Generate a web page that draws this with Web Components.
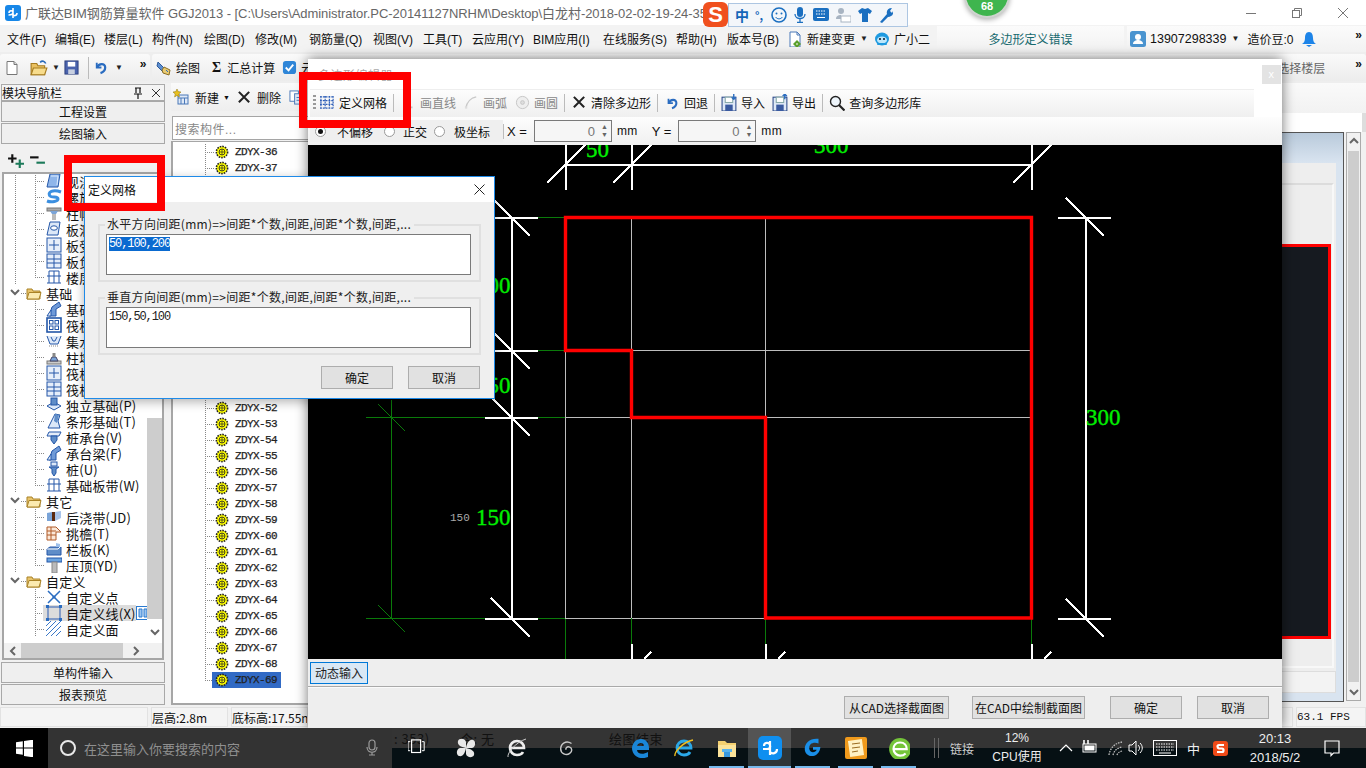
<!DOCTYPE html>
<html lang="zh">
<head>
<meta charset="utf-8">
<title>GGJ2013</title>
<style>
  html, body { margin: 0; height: 100%; overflow: hidden; background: #000; }
  body { font: 12px "Liberation Sans", "Noto Sans CJK SC", sans-serif; color: #111; }
</style>
</head>
<body>
<gl-desktop>
  <gl-app></gl-app>
  <gl-taskbar></gl-taskbar>
  <polygon-editor></polygon-editor>
  <grid-dialog></grid-dialog>
  <red-mark style="left:299px;top:72px;width:112px;height:56px"></red-mark>
  <red-mark style="left:64px;top:155px;width:101px;height:56px"></red-mark>
  <ime-bar></ime-bar>
  <speed-badge>68</speed-badge>
</gl-desktop>

<script>
const CJK = '"Liberation Sans", "Noto Sans CJK SC", sans-serif';
const SONG = '"Noto Sans CJK SC", "Liberation Sans", sans-serif';

const svg = (w, h, body, box) => `<svg width="${w}" height="${h}" viewBox="${box || `0 0 ${w} ${h}`}" style="display:block;flex:none">${body}</svg>`;

const ICONS = {
  // main toolbar
  doc: `<path d="M3 1.5h7l3 3v10H3z" fill="#fff" stroke="#777"/><path d="M10 1.5v3h3" fill="#ddd" stroke="#777"/>`,
  open: `<path d="M1 4h5l1 2h6v8H1z" fill="#e9c060" stroke="#a67c20"/><path d="M3 8h12l-2 6H1z" fill="#f7dc8c" stroke="#a67c20"/><path d="M9 3c2-2 4-1 5 1" fill="none" stroke="#2a6ab8" stroke-width="1.4"/>`,
  save: `<rect x="1" y="1" width="14" height="14" fill="#4a63ad" stroke="#2c3f7c"/><rect x="4" y="2" width="8" height="5" fill="#fff"/><rect x="4.5" y="10" width="7" height="5" fill="#c8d0e0"/>`,
  undo: `<path d="M4 3v5h5" fill="none" stroke="#2a6cc0" stroke-width="2"/><path d="M4.5 8C6 3.5 13 3 13 8c0 3-2 5-5 6" fill="none" stroke="#2a6cc0" stroke-width="2.4"/>`,
  brush: `<path d="M2 2l6 6-2 3-5-5z" fill="#5c8ed0" stroke="#2c5a9a"/><path d="M8 7l6 3-1 5-6-2-1-3z" fill="#e8c970" stroke="#8a6e26"/><path d="M10 10l2 2" stroke="#2a6cc0"/>`,
  cloud: `<rect x="1" y="1" width="14" height="14" rx="3" fill="#2f86d8"/><path d="M4 8l3 3 5-6" fill="none" stroke="#fff" stroke-width="2"/>`,
  change: `<path d="M3 1h7l3 3v12H3z" fill="#fff" stroke="#4a78b8"/><path d="M10 1v3h3" fill="none" stroke="#4a78b8"/><path d="M10 9l4 4-4 4-4-4z" fill="#5aa02c"/><path d="M9 13h2" stroke="#fff"/>`,
  robot: `<ellipse cx="8" cy="8" rx="7" ry="6.5" fill="#1f9ae0"/><ellipse cx="8" cy="9" rx="5" ry="3.6" fill="#bfe8fb"/><circle cx="6" cy="8" r="1.1" fill="#123"/><circle cx="10" cy="8" r="1.1" fill="#123"/><path d="M3 14l1-2h8l1 2" fill="#1f9ae0"/>`,
  user: `<rect width="16" height="16" rx="2.5" fill="#4a94d0"/><circle cx="8" cy="6" r="3" fill="#fff"/><path d="M3 13c0-3 3-4 5-4s5 1 5 4z" fill="#fff"/>`,
  bell: `<path d="M8 1c3 0 4 3 4 6 0 3 1 5 3 6H1c2-1 3-3 3-6 0-3 1-6 4-6z" fill="#1d84e8"/><path d="M5 14h6l-3 2z" fill="#1d84e8"/>`,
  // nav + list
  plus: `<path d="M5 3v8M1 7h8" stroke="#111" stroke-width="2"/><path d="M12 8v8M8 12h8" stroke="#1c7a5a" stroke-width="2"/>`,
  minus: `<path d="M1 6h8" stroke="#111" stroke-width="2"/><path d="M7 11h8" stroke="#1c7a5a" stroke-width="2"/>`,
  addnew: `<rect x="5" y="6" width="10" height="9" fill="#dfe9f7" stroke="#4a78b8"/><path d="M5 9h10M8 9v6M11.5 9v6" stroke="#4a78b8"/><path d="M4 0l1.2 2.6L8 3 5.8 5 6.4 8 4 6.4 1.6 8l.6-3L0 3l2.8-.4z" fill="#e8c020" stroke="#8a7010" stroke-width=".5"/>`,
  cross: `<path d="M2 2l11 11M13 2L2 13" stroke="#222" stroke-width="2.2"/>`,
  copy: `<rect x="1" y="1" width="9" height="11" fill="#fff" stroke="#4a78b8"/><rect x="6" y="4" width="9" height="11" fill="#dfe9f7" stroke="#4a78b8"/><path d="M8 8h5M8 11h5" stroke="#4a78b8"/>`,
  gear: `<circle cx="7" cy="7" r="5.6" fill="#ff0" stroke="#222" stroke-width="1.6" stroke-dasharray="1.6 1"/><circle cx="7" cy="7" r="3" fill="#ff0" stroke="#222" stroke-width=".8"/><path d="M7 4v6M4 7h6" stroke="#222" stroke-width=".7"/>`,
  // tree
  folder: `<path d="M1 4h5l1 2h7v8H1z" fill="#e8c46c" stroke="#a98226"/><path d="M3 7.5h12l-2 6.5H1z" fill="#fbeab0" stroke="#a98226"/>`,
  slab: `<path d="M4 1h10l-2 13H1z" fill="#8fb6ea" stroke="#2457a8"/><path d="M5 3h7l-1 9" fill="none" stroke="#dcebff"/>`,
  spiral: `<path d="M15 3C7 0 1 3 4 7c2 2 8 0 8 3 0 2-6 4-11 2" fill="none" stroke="#3b8fe0" stroke-width="3"/>`,
  cap: `<rect x="1" y="3" width="14" height="3" fill="#aaa" stroke="#777"/><path d="M4 6h8l-2 3H6z" fill="#7aa4d8"/><rect x="6" y="9" width="4" height="6" fill="#bbb"/>`,
  hole: `<path d="M4 1h10l-2 13H1z" fill="#dce8f8" stroke="#2457a8"/><ellipse cx="8" cy="7" rx="3.4" ry="2.2" fill="#fff" stroke="#2457a8"/>`,
  cell: `<rect x="1" y="1" width="14" height="14" fill="#e6eefa" stroke="#2457a8"/><path d="M8 3v10M3 8h10" stroke="#2457a8"/>`,
  cell2: `<rect x="1" y="1" width="14" height="14" fill="#e6eefa" stroke="#2457a8"/><path d="M8 1v14M1 6h14M1 10h14" stroke="#2457a8"/>`,
  beam: `<path d="M1 14h14" stroke="#2457a8"/><path d="M3 2h10M3 14V2M8 14V2M13 14V2M1 7h14" stroke="#2457a8"/>`,
  column: `<path d="M3 15l3-9 7-5 2 4-5 3v7z" fill="#6f9ad8" stroke="#2457a8"/><path d="M1 15l4-6v6z" fill="#dce8f8" stroke="#2457a8"/>`,
  grid: `<rect x="1" y="1" width="14" height="14" fill="#fff" stroke="#2457a8" stroke-width="1.6"/><rect x="3.5" y="3.5" width="3.5" height="3.5" fill="none" stroke="#2457a8"/><rect x="9" y="3.5" width="3.5" height="3.5" fill="none" stroke="#2457a8"/><rect x="3.5" y="9" width="3.5" height="3.5" fill="none" stroke="#2457a8"/><rect x="9" y="9" width="3.5" height="3.5" fill="none" stroke="#2457a8"/>`,
  pit: `<path d="M1 3l3 8h8l3-8" fill="#dce8f8" stroke="#2457a8"/><path d="M5 4l2 4h2l2-4" fill="none" stroke="#2457a8"/><path d="M3 13h10" stroke="#888" stroke-dasharray="1 1"/>`,
  pier: `<rect x="1" y="12" width="14" height="3" fill="#ccc" stroke="#777"/><path d="M4 12l2-4h4l2 4z" fill="#7aa4d8" stroke="#446"/><rect x="6.5" y="4" width="3" height="4" fill="#888"/>`,
  footing: `<path d="M1 9l7-4 7 4-7 4z" fill="#dce8f8" stroke="#2457a8"/><rect x="5" y="1" width="6" height="7" fill="#5f8dc8" stroke="#2457a8"/>`,
  strip: `<path d="M2 15l4-8 3-6 5 1-2 6 2 7H2z" fill="#dce8f8" stroke="#2457a8"/><path d="M9 1l4 1-2 8-3-2z" fill="#5f8dc8"/>`,
  cap2: `<path d="M1 7l2-4h12l-2 4z" fill="#e4ecf8" stroke="#2457a8"/><path d="M5 7h6v4l-3 4-3-4z" fill="#5f8dc8" stroke="#2457a8"/>`,
  pile: `<rect x="5" y="1" width="6" height="4" fill="#dce8f8" stroke="#2457a8"/><path d="M3 6h10l-3 2v4l-2 3-2-3V8z" fill="#5f8dc8" stroke="#2457a8"/>`,
  pour: `<path d="M1 4l5-1v9H1z" fill="#7aa4d8"/><path d="M6 3h3v9H6z" fill="#5b2a10"/><path d="M9 3l6-1v7l-6 3z" fill="#a8c4ea"/>`,
  eave: `<path d="M1 2h9l5 5h-5v8H1z" fill="#fbe8d8" stroke="#b05a28"/><path d="M1 6h9M1 10h9M5 2v13" stroke="#b05a28"/>`,
  rail: `<path d="M1 8l3-2h11v8H1z" fill="#5f8dc8" stroke="#2457a8"/><path d="M1 8h11l3-3" fill="none" stroke="#fff"/><path d="M10 2l4 1v3h-4z" fill="#9ec0ea"/>`,
  coping: `<rect x="1" y="1" width="15" height="4" fill="#6aa4e0" stroke="#2457a8"/><rect x="6" y="5" width="5" height="11" fill="#bbb" stroke="#888"/>`,
  xpoint: `<path d="M2 2l12 12M14 2L2 14" stroke="#2a6cc0" stroke-width="1.5"/><circle cx="8" cy="8" r="1.6" fill="#2a6cc0"/>`,
  xline: `<rect x="2" y="2" width="12" height="12" fill="none" stroke="#2a5ab0"/><path d="M0 0h3v3H0zM13 0h3v3h-3zM0 13h3v3H0zM13 13h3v3h-3z" fill="#2a6cc0"/>`,
  xface: `<path d="M0 5l5-5M0 10L10 0M0 15L15 0M5 15L15 5M10 15l5-5" stroke="#3a78c8"/>`,
  // polygon editor
  mesh: `<path d="M1 1v13M5.5 1v13M10 1v13M14 1v13M0 2h15M0 6h15M0 10h15M0 14h15" stroke="#2f5fb8" stroke-dasharray="2 1" stroke-width="1.2"/>`,
  line: `<path d="M3 2l2 10" stroke="#d2d2d2"/><path d="M6 9v4h6" fill="none" stroke="#c4c4c4" stroke-width="2"/>`,
  arc: `<path d="M2 14C3 7 8 3 13 2" fill="none" stroke="#c8c8c8" stroke-width="1.5"/><rect x="1" y="12" width="2.5" height="2.5" fill="#ddd"/>`,
  circle: `<circle cx="8" cy="8" r="6.5" fill="#eee" stroke="#c4c4c4"/><circle cx="8" cy="8" r="2" fill="#ddd" stroke="#c4c4c4"/>`,
  diskin: `<rect x="1" y="3" width="13" height="13" fill="#dfe9f7" stroke="#2c4a8a"/><rect x="4" y="10" width="7" height="6" fill="#3a5aa0"/><rect x="4" y="3" width="7" height="5" fill="#fff" stroke="#8aa"/><path d="M12 0v5M10 3l2 2 2-2" fill="none" stroke="#2a6cc0" stroke-width="1.3"/>`,
  diskout: `<rect x="1" y="3" width="13" height="13" fill="#dfe9f7" stroke="#2c4a8a"/><rect x="4" y="10" width="7" height="6" fill="#3a5aa0"/><rect x="4" y="3" width="7" height="5" fill="#fff" stroke="#8aa"/><path d="M12 5V0M10 2l2-2 2 2" fill="none" stroke="#2a6cc0" stroke-width="1.3"/>`,
  zoom: `<circle cx="6.5" cy="6.5" r="5" fill="#eef5fb" stroke="#222" stroke-width="1.4"/><path d="M10 10l5.5 5.5" stroke="#222" stroke-width="2.2"/>`,
  // taskbar
  win: `<path d="M0 2.2l6.8-1v6.2H0zM8 1l9-1.3v7.7H8zM0 8.6h6.8v6.2l-6.8-1zM8 8.6h9v8.7l-9-1.3z" fill="#fff"/>`,
  mic: `<rect x="5" y="1" width="6" height="10" rx="3" fill="none" stroke="#9a9a9a" stroke-width="1.2"/><path d="M3 8c0 7 10 7 10 0M8 13v3M5 16h6" fill="none" stroke="#9a9a9a" stroke-width="1.2"/>`,
  taskview: `<rect x="4" y="1" width="10" height="14" fill="none" stroke="#fff" stroke-width="1.3"/><path d="M2.5 3H0v10h2.5M15.5 3H18v10h-2.5" fill="none" stroke="#fff" stroke-width="1.1"/>`,
  pinwheel: `<g fill="#e8e8e8"><path d="M10 10C5 9 1 7 2 3c1-3 7-3 8 1z"/><path d="M10 10C11 5 13 1 17 2c3 1 3 7-1 8z"/><path d="M10 10C15 11 19 13 18 17c-1 3-7 3-8-1z"/><path d="M10 10C9 15 7 19 3 18c-3-1-3-7 1-8z"/></g>`,
  ieline: `<path d="M3 10h14c0-4-3-7-7-7s-7 3-7 7 3 7 7 7c3 0 5-1 6-3" fill="none" stroke="#eee" stroke-width="2.6"/><path d="M1 19C0 15 9 4 19 1" fill="none" stroke="#ccc"/>`,
  gswirl: `<path d="M15 5C9 1 3 5 3 11c0 5 6 8 10 5 3-2 3-6 0-7-3-1-5 1-4 3" fill="none" stroke="#c8c8c8" stroke-width="1.6"/>`,
  edge: `<path d="M2 11C2 5 6 1 11 1c5 0 8 4 8 9v2H7c0 4 6 5 11 2v5c-7 3-15 0-16-8zM7 8h7c0-4-6-4-7 0z" fill="#1a86d8"/>`,
  ie: `<path d="M3 10h14c0-4-3-7-7-7s-7 3-7 7 3 7 7 7c3 0 5-1 6-3" fill="none" stroke="#2ba8e8" stroke-width="2.8"/><path d="M1 18C0 14 9 4 19 2" fill="none" stroke="#f0c020" stroke-width="1.4"/>`,
  explorer: `<path d="M1 3h7l2 2h9v14H1z" fill="#f4d070"/><rect x="1" y="7" width="18" height="12" fill="#fbe39a"/><path d="M7 13h6v6H7z" fill="#3a9ae0"/><path d="M5 11h10v3H5z" fill="#5ab4ee"/>`,
  gld: `<rect x="0" y="0" width="24" height="24" rx="5" fill="#0f8ff0"/><path d="M12 5v14M6 10c0-4 5-4 6-1s-1 4-3 4H5M19 13c0 5-5 5-7 3" fill="none" stroke="#fff" stroke-width="2.2"/>`,
  gblue: `<path d="M18 2C9 1 3 6 3 13c0 7 8 10 13 6 3-2 4-6 4-8h-8v3h4c-1 3-7 4-8-1-1-6 5-8 10-6z" fill="#1a8fe8"/>`,
  notes: `<rect x="1" y="1" width="22" height="22" rx="2" fill="#f09a1c"/><rect x="5" y="4" width="14" height="16" fill="#fff1c4" transform="rotate(-8 12 12)"/><path d="M8 8l8-1M8 12l8-1M8 16l6-1" stroke="#9a6a20"/>`,
  greene: `<circle cx="11" cy="11" r="10" fill="#74c43a"/><path d="M5 11h12c0-3-2-6-6-6s-6 3-6 6 3 6 6 6c2 0 4-1 5-2" fill="none" stroke="#fff" stroke-width="2"/>`,
  battery: `<rect x="2" y="5" width="13" height="8" fill="none" stroke="#fff"/><rect x="3.5" y="6.5" width="10" height="5" fill="#fff"/><path d="M3 1v4M7 1v4" stroke="#fff" stroke-width="1.6"/>`,
  wifi: `<path d="M2 15C3 8 8 3 15 2M6 15c1-4 4-7 9-8M10 15c.5-2 2-3 5-4" fill="none" stroke="#bbb" stroke-dasharray="1.6 1" stroke-width="1.3"/>`,
  volume: `<path d="M1 6h3l4-4v14l-4-4H1z" fill="none" stroke="#fff"/><path d="M10 6c2 2 2 4 0 6M12 4c3 3 3 7 0 10" fill="none" stroke="#fff"/>`,
  keyboard: `<rect x=".5" y=".5" width="23" height="15" fill="none" stroke="#fff"/><path d="M3 4h18M3 7h18M3 10h18" stroke="#fff" stroke-dasharray="1.5 1"/><path d="M6 13h12" stroke="#fff"/>`,
  sogou: `<rect x="1" y="1" width="15" height="15" rx="3" fill="#f04a18"/><path d="M12 5H7c-2 0-2 3 0 3.500h3c2 0 2 3.500 0 3.500H5" fill="none" stroke="#fff" stroke-width="2.2"/>`,
  notify: `<path d="M1 1h14v12H9.500L7 15.500V13H1z" fill="none" stroke="#fff" stroke-width="1.2"/>`,
  logo: `<rect width="16" height="16" rx="3" fill="#1787e8"/><path d="M8 3v10M4 8c0-3 4-3 4-.5S6 10 3.500 10M12 8c0 3-4 3.500-4 1" fill="none" stroke="#fff" stroke-width="1.6"/>`
};
const icon = (name, w = 16, h = w, box = '0 0 16 16') => svg(w, h, ICONS[name], box);

class Part extends HTMLElement {
  constructor() {
    super();
    this.attachShadow({ mode: 'open' });
  }
  connectedCallback() {
    this.shadowRoot.innerHTML = `<style>${this.constructor.styles}</style>${this.markup()}`;
  }
  markup() { return '<slot></slot>'; }
}

class GlDesktop extends Part {
  static styles = `:host { display: flex; flex-direction: column; position: relative; width: 1366px; height: 768px; overflow: hidden; }`;
}

class RedMark extends Part {
  static styles = `:host { position: absolute; box-sizing: border-box; border: 8px solid #f00; z-index: 5; }`;
}

class SpeedBadge extends Part {
  static styles = `:host { position: absolute; left: 964px; top: -28px; width: 46px; height: 46px; box-sizing: border-box; border-radius: 50%;
      background: #3fb54e; border: 2px solid #cfd4cf; box-shadow: 0 2px 5px rgba(0,0,0,.3); color: #fff; font: bold 11px "Liberation Sans", sans-serif;
      display: flex; align-items: flex-end; justify-content: center; padding-bottom: 4px; z-index: 6; }`;
}

class ImeBar extends Part {
  static styles = `
    :host { position: absolute; left: 703px; top: 2px; display: flex; align-items: center; z-index: 6; }
    .s { width: 25px; height: 25px; border-radius: 6px; background: #f0501e; color: #fff; font: bold 22px "Liberation Sans", sans-serif; display: flex; align-items: center; justify-content: center; position: relative; z-index: 1; }
    .bar { display: flex; align-items: center; gap: 6px; height: 24px; width: 180px; box-sizing: border-box; padding-left: 6px; background: #f3f6fa; border: 1px solid #adc6e2; color: #1565b8; font: bold 14px "Noto Sans CJK SC", sans-serif; }
    .p { width: 10px; font-size: 11px; }`;
  markup() {
    const blue = '#1b6fc0';
    return `<div class="s">S</div><div class="bar"><span>中</span><span class="p">°,</span>
      ${svg(16, 16, `<circle cx="8" cy="8" r="7" fill="none" stroke="${blue}" stroke-width="1.6"/><circle cx="5.500" cy="6.500" r="1" fill="${blue}"/><circle cx="10.500" cy="6.500" r="1" fill="${blue}"/><path d="M4.500 10c2 2.500 5 2.500 7 0" fill="none" stroke="${blue}"/>`)}
      ${svg(14, 16, `<rect x="4" y="0" width="6" height="10" rx="3" fill="${blue}"/><path d="M2 7c0 6 10 6 10 0M7 12v3M4 15.500h6" fill="none" stroke="${blue}" stroke-width="1.3"/>`)}
      ${svg(16, 14, `<rect width="16" height="13" rx="2" fill="${blue}"/><path d="M3 3h10M3 6h10" stroke="#fff" stroke-dasharray="1.500 1"/><path d="M4 9.500h8" stroke="#fff"/>`)}
      ${svg(16, 16, `<circle cx="6" cy="4" r="3" fill="#a8b4c2"/><path d="M1 12c0-3 2-4 5-4v4z" fill="#a8b4c2"/><rect x="6" y="9" width="10" height="6" fill="#fff" stroke="#a8b4c2"/>`)}
      ${svg(16, 16, `<path d="M5 1L1 4l2 3 2-1v9h6V6l2 1 2-3-4-3-3 1z" fill="${blue}"/>`)}
      ${svg(14, 16, `<path d="M1 15l7-8c-1-3 1-6 5-6l-2 3 2 2 1-2c1 4-2 6-5 6l-6 6z" fill="${blue}"/>`)}</div>`;
  }
}

class WinControls extends Part {
  static styles = `:host { display: flex; margin-left: auto; flex: none; color: #777; } span { width: 46px; display: flex; justify-content: center; }`;
  markup() {
    return `<span>${svg(10, 10, `<path d="M0 5.500h10" stroke="#777"/>`)}</span>
      <span>${svg(10, 10, `<rect x=".5" y="2.500" width="7" height="7" fill="none" stroke="#777"/><path d="M2.500 2.500v-2h7v7h-2" fill="none" stroke="#777"/>`)}</span>
      <span>${svg(10, 10, `<path d="M0 0l10 10M10 0L0 10" stroke="#777"/>`)}</span>`;
  }
}

class GlApp extends Part {
  static styles = `
    :host { display: flex; flex-direction: column; width: 1366px; height: 728px; flex: none; background: #f1f1f1; }
    .title { height: 25px; background: #fff; display: flex; align-items: center; padding-left: 5px; gap: 2px; color: #666; font-size: 13px; letter-spacing: -.06px; white-space: nowrap; overflow: hidden; flex: none; }
    .title b { font-weight: 400; width: 678px; margin-left: 2px; overflow: hidden; }
    .menu { height: 27px; display: flex; align-items: center; padding-left: 7px; font-size: 12px; background: #f3f3f3; position: relative; flex: none; }
    .menu span { white-space: nowrap; flex: none; }
    .menu .with { display: flex; gap: 4px; align-items: center; }
    .tab { width: 187px; height: 26px; background: linear-gradient(#fbfbfb, #f2f2f2); color: #16696e; font-size: 12px; display: flex; align-items: center; justify-content: center; flex: none; }
    .user { flex: 1; height: 26px; margin-left: 3px; padding-left: 3px; display: flex; align-items: center; background: linear-gradient(#fbfbfb, #f2f2f2); }
    .user span { white-space: nowrap; }
    .tools { height: 31px; display: flex; gap: 2px; background: #eeeeee; flex: none; }
    .group { display: flex; align-items: center; background: linear-gradient(#fafafa, #ececec); border-radius: 3px; margin-top: 2px; height: 27px; flex: none; }
    .sep { width: 1px; height: 22px; background: #bbb; }
    .drop { font-size: 8px; color: #222; }
    .more { font-size: 12px; font-weight: bold; color: #111; }
    .body { flex: 1; display: flex; min-height: 0; }
    .status { height: 22px; display: flex; gap: 3px; font: 12px ${SONG}; flex: none; padding-top: 1px; box-sizing: border-box; }
    .status span { border: 1px solid #e2e2e2; background: #f4f4f4; height: 20px; box-sizing: border-box; display: flex; align-items: center; white-space: nowrap; overflow: hidden; }`;
  markup() {
    const menus = [['文件(F)', 48], ['编辑(E)', 49], ['楼层(L)', 48], ['构件(N)', 52], ['绘图(D)', 51], ['修改(M)', 54], ['钢筋量(Q)', 64], ['视图(V)', 50], ['工具(T)', 49], ['云应用(Y)', 61], ['BIM应用(I)', 70], ['在线服务(S)', 73], ['帮助(H)', 51], ['版本号(B)', 60]];
    return `
      <div class="title">${icon('logo', 16)}<b>广联达BIM钢筋算量软件 GGJ2013 - [C:\\Users\\Administrator.PC-20141127NRHM\\Desktop\\白龙村-2018-02-02-19-24-35</b><win-controls></win-controls></div>
      <div class="menu">${menus.map(([m, w]) => `<span style="width:${w}px">${m}</span>`).join('')}
        <span class="with" style="width:87px">${icon('change', 16)}新建变更<i class="drop" style="font-style:normal;margin-left:1px">▼</i></span>
        <span class="with" style="width:63px">${icon('robot', 16)}广小二</span>
        <div class="tab">多边形定义错误</div>
        <div class="user">
          <span class="with" style="font-size:12.500px">${icon('user', 16)}13907298339</span><span class="drop" style="margin-left:5px">▼</span>
          <span style="margin-left:8px">造价豆:0</span><span style="margin-left:8px">${icon('bell', 16)}</span>
          <span class="more" style="margin-left:auto;padding-right:4px;margin-top:-8px">»</span>
        </div></div>
      <div class="tools">
        <div class="group" style="width:150px;padding-left:4px;gap:4px;box-sizing:border-box">
          ${icon('doc', 16)}<span style="width:2px"></span>${icon('open', 18, 18)}<span class="drop">▼</span>${icon('save', 15)}<span style="width:1px"></span><i class="sep"></i>${icon('undo', 15)}<span class="drop" style="margin-left:3px">▼</span><span class="more" style="margin-left:13px;margin-top:-8px">»</span>
        </div>
        <div class="group" style="flex:1;padding-left:4px;gap:4px">
          ${icon('brush', 16)}<span>绘图</span>
          <span style="font:bold 14px 'Liberation Serif',serif;margin-left:8px">Σ</span><span style="margin-left:2px">汇总计算</span>
          <span style="margin-left:3px">${icon('cloud', 15)}</span><span>云</span>
          <span style="margin-left:auto;color:#666;margin-right:26px">选择楼层</span><span class="more" style="margin-right:4px;margin-top:-8px">»</span>
        </div>
      </div>
      <div class="body"><nav-panel></nav-panel><part-list></part-list><work-area></work-area></div>
      <div class="status">
        <span style="width:148px"></span><span style="width:77px">层高:2.8m</span><span style="width:77px">底标高:17.55m</span>
        <span style="width:982px"></span><span style="width:70px;font:11px 'Liberation Mono',monospace">63.1 FPS</span>
      </div>`;
  }
}

class NavPanel extends Part {
  static styles = `
    :host { display: flex; flex-direction: column; width: 165px; flex: none; font: 12px ${SONG}; padding-left: 1px; box-sizing: border-box; }
    .head { height: 17px; display: flex; align-items: center; border: 1px solid #aaa; box-sizing: border-box; margin-top: 1px; background: #f4f4f4; gap: 0; font-size: 12px; }
    .head b { font-weight: 400; flex: 1; }
    .btn { height: 21px; margin-bottom: 1px; background: #efefef; border: 1px solid #a8a8a8; box-sizing: border-box; display: flex; align-items: center; justify-content: center; font-size: 12px; flex: none; }
    .ops { height: 26px; display: flex; align-items: center; gap: 5px; padding-left: 6px; flex: none; margin-top: 1px; }
    .tree { flex: 1; min-height: 0; background: #fff; border: 2px solid #a6a6a6; margin: 0 1px 2px 1px; display: grid; grid-template-columns: 1fr 15px; grid-template-rows: 1fr 15px; overflow: hidden; }
    .rows { overflow: hidden; min-width: 0; margin-top: -1px; }
    .vbar { display: flex; flex-direction: column; align-items: center; padding-top: 244px; }
    .thumb { width: 15px; background: #cdcdcd; height: 201px; flex: none; }
    .hbar { grid-column: 1 / 3; display: flex; align-items: center; background: #f1f1f1; color: #666; }
    .hthumb { width: 102px; height: 15px; background: #cdcdcd; margin-left: 3px; }`;
  markup() {
    const chev = d => svg(10, 10, `<path d="${d}" fill="none" stroke="#666" stroke-width="2"/>`);
    return `
      <div class="head"><b>模块导航栏</b>${svg(10, 12, `<path d="M2 1h6M3 1v5M7 1v5M1 7h8M5 7v5" stroke="#111" stroke-width="1.200"/>`)}<span style="width:8px"></span>${svg(10, 10, `<path d="M1 1l8 8M9 1l-8 8" stroke="#333"/>`)}<span style="width:3px"></span></div>
      <div class="btn">工程设置</div>
      <div class="btn">绘图输入</div>
      <div class="ops">${icon('plus', 17)}${icon('minus', 17)}</div>
      <div class="tree">
        <div class="rows">
          <tree-row icon="slab">现浇板(B)</tree-row>
          <tree-row icon="spiral">螺旋板(B)</tree-row>
          <tree-row icon="cap">柱帽(V)</tree-row>
          <tree-row icon="hole">板洞(N)</tree-row>
          <tree-row icon="cell">板受力筋(S)</tree-row>
          <tree-row icon="cell2">板负筋(F)</tree-row>
          <tree-row icon="beam" end>楼层板带(H)</tree-row>
          <tree-row folder>基础</tree-row>
          <tree-row icon="column">基础梁(F)</tree-row>
          <tree-row icon="grid">筏板基础(M)</tree-row>
          <tree-row icon="pit">集水坑(K)</tree-row>
          <tree-row icon="pier">柱墩(Y)</tree-row>
          <tree-row icon="cell">筏板主筋(R)</tree-row>
          <tree-row icon="cell2">筏板负筋(X)</tree-row>
          <tree-row icon="footing">独立基础(P)</tree-row>
          <tree-row icon="strip">条形基础(T)</tree-row>
          <tree-row icon="cap2">桩承台(V)</tree-row>
          <tree-row icon="column">承台梁(F)</tree-row>
          <tree-row icon="pile">桩(U)</tree-row>
          <tree-row icon="beam" end>基础板带(W)</tree-row>
          <tree-row folder>其它</tree-row>
          <tree-row icon="pour">后浇带(JD)</tree-row>
          <tree-row icon="eave">挑檐(T)</tree-row>
          <tree-row icon="rail">栏板(K)</tree-row>
          <tree-row icon="coping" end>压顶(YD)</tree-row>
          <tree-row folder last>自定义</tree-row>
          <tree-row icon="xpoint" nov>自定义点</tree-row>
          <tree-row icon="xline" nov selected>自定义线(X)</tree-row>
          <tree-row icon="xface" nov>自定义面</tree-row>
        </div>
        <div class="vbar"><div class="thumb"></div><div style="margin-top:9px">${chev('M1 2l4 4 4-4')}</div></div>
        <div class="hbar"><span style="margin-left:4px">${chev('M7 1L3 5l4 4')}</span><div class="hthumb"></div><span style="margin-left:8px">${chev('M3 1l4 4-4 4')}</span></div>
      </div>
      <div class="btn">单构件输入</div>
      <div class="btn">报表预览</div>`;
  }
}

class TreeRow extends Part {
  static styles = `
    :host { display: flex; align-items: center; height: 16px; white-space: nowrap; font: 13px ${SONG}; letter-spacing: .2px; background-repeat: no-repeat;
      --v: repeating-linear-gradient(#888 0 1px, transparent 1px 2px); --h: repeating-linear-gradient(90deg, #888 0 1px, transparent 1px 2px);
      background-image: var(--v), var(--v), var(--h); background-size: 1px 100%, 1px 100%, 10px 1px; background-position: 11px 0, 31px 0, 31px 8px; padding-left: 42px; }
    :host([end]) { background-size: 1px 100%, 1px 9px, 10px 1px; }
    :host([nov]) { background-image: none, var(--v), var(--h); }
    :host([folder]) { padding-left: 6px; background-image: var(--h); background-size: 6px 1px; background-position: 17px 8px; }
    .chev { width: 10px; margin-right: 6px; }
    .label { margin-left: 4px; }
    .hit { display: flex; align-items: center; }
    :host([selected]) .hit { background: #dcdcdc; height: 16px; margin-left: -3px; padding-left: 3px; }`;
  markup() {
    if (this.hasAttribute('folder')) {
      return `<span class="chev">${svg(10, 8, `<path d="M1 1l4 4 4-4" fill="none" stroke="#666" stroke-width="2"/>`)}</span>${icon('folder', 16)}<span class="label"><slot></slot></span>`;
    }
    const mini = this.hasAttribute('selected')
      ? svg(14, 14, `<rect x=".5" y=".5" width="13" height="13" fill="#fff" stroke="#2a7ad0"/><path d="M3 3h3v8H3zM8 3h3v8H8z" fill="#9cc4ef" stroke="#2a7ad0"/>`) : '';
    return `<span class="hit">${icon(this.getAttribute('icon'), 16)}<span class="label"><slot></slot></span></span>${mini}`;
  }
}

class PartList extends Part {
  static styles = `
    :host { display: flex; flex-direction: column; width: 143px; flex: none; margin-left: 6px; font: 12px ${CJK}; overflow: hidden; }
    .bar { height: 28px; display: flex; align-items: center; gap: 3px; padding-left: 2px; flex: none; background: linear-gradient(#fafafa, #eee); white-space: nowrap; box-sizing: border-box; }
    .search { height: 24px; margin: 5px 0 1px 1px; border: 1px solid #a5a5a5; background: #fff; color: #888; font-size: 12px; padding-left: 2px; display: flex; align-items: center; box-sizing: border-box; letter-spacing: .5px; flex: none; }
    .list { flex: 1; background: #fff; border-left: 2px solid #a6a6a6; border-top: 1px solid #a6a6a6; border-bottom: 2px solid #a6a6a6; padding-top: 2px; overflow: hidden; margin-bottom: 1px; }`;
  markup() {
    let rows = '';
    for (let n = 36; n <= 69; n++) rows += `<list-row ${n === 69 ? 'selected' : ''}>ZDYX-${n}</list-row>`;
    return `
      <div class="bar">${icon('addnew', 16)}<span style="margin-left:3px">新建</span><span style="font-size:7px;margin-left:1px">▼</span><span style="width:1px"></span>${icon('cross', 15)}<span style="margin-left:2px">删除</span><span style="width:2px"></span>${icon('copy', 15)}</div>
      <div class="search">搜索构件...</div>
      <div class="list">${rows}</div>`;
  }
}

class ListRow extends Part {
  static styles = `
    :host { display: flex; align-items: center; height: 16px; padding-left: 41px; font: 11px "Liberation Mono", monospace; letter-spacing: -.6px; color: #222; -webkit-text-stroke: .25px #222;
      --dot: repeating-linear-gradient(90deg, #888 0 1px, transparent 1px 2px); background: var(--dot) 32px 8px / 10px 1px no-repeat, repeating-linear-gradient(#888 0 1px, transparent 1px 2px) 32px 0 / 1px 100% no-repeat; }
    :host([selected]) { background: var(--dot) 32px 8px / 7px 1px no-repeat, repeating-linear-gradient(#888 0 1px, transparent 1px 2px) 32px 0 / 1px 9px no-repeat; }
    .box { display: flex; align-items: center; gap: 6px; padding: 0 1px; height: 16px; }
    :host([selected]) .box { background: #316ac5; margin-left: -2px; padding-left: 3px; width: 69px; box-sizing: border-box; }`;
  markup() { return `<span class="box">${icon('gear', 14, 14, '0 0 14 14')}<slot></slot></span>`; }
}

class WorkArea extends Part {
  static styles = `
    :host { flex: 1; display: flex; flex-direction: column; min-width: 0; }
    .band { height: 30px; background: linear-gradient(#fafafa, #f2f2f2); flex: none; }
    .white { height: 19px; background: #fff; flex: none; border-right: 4px solid #ddd; }
    .row { flex: 1; display: flex; min-height: 0; padding: 0 5px 2px 0; background: #f1f1f1; }
    .frame { flex: 1; display: flex; flex-direction: column; border: 1px solid #555; border-left: 0; background: #d9e4f0; padding-right: 7px; box-sizing: border-box; margin-bottom: 2px; }
    .cap { height: 30px; background: linear-gradient(#b9cadb, #d9e4f0); margin-right: -7px; flex: none; }
    .inner { flex: 1; background: #eee; padding: 20px 2px 3px 0; display: flex; flex-direction: column; min-height: 0; }
    .box { flex: 1; border: 2px solid #dcdcdc; border-bottom-color: #f8f8f8; border-right-color: #f8f8f8; padding: 59px 1px 27px 0; background: #eee; display: flex; }
    .draw { flex: 1; background: #161a20; border: 3px solid #f00; border-left: 0; }
    .grip { height: 22px; background: #f3f3f3; border: 1px solid #ddd; box-sizing: border-box; flex: none; margin-bottom: 8px; }
    .scroll { width: 15px; box-sizing: border-box; margin-left: 2px; border: 1px solid #aaa; background: #f1f1f1; display: flex; flex-direction: column; align-items: center; padding: 4px 1px; margin-bottom: 3px; }
    .scroll div { flex: 1; width: 100%; background: #cdcdcd; margin: 6px 0 6px; }`;
  markup() {
    const chev = d => svg(10, 8, `<path d="${d}" fill="none" stroke="#666" stroke-width="2"/>`);
    return `
      <div class="band"></div><div class="white"></div>
      <div class="row">
        <div class="frame">
          <div class="cap"></div>
          <div class="inner"><div class="box"><div class="draw"></div></div></div>
          <div class="grip"></div>
        </div>
        <div class="scroll">${chev('M1 6l4-4 4 4')}<div></div>${chev('M1 2l4 4 4-4')}</div>
      </div>`;
  }
}

class PolygonEditor extends Part {
  static styles = `
    :host { position: absolute; left: 308px; top: 59px; width: 974px; height: 669px; display: flex; flex-direction: column; background: #fff; box-shadow: 0 0 12px rgba(0,0,0,.55); z-index: 2; font: 12px ${CJK}; }
    .title { height: 30px; display: flex; align-items: center; padding-left: 10px; color: #aaa; font-size: 12px; letter-spacing: .5px; flex: none; }
    .x { width: 19px; height: 19px; margin-left: auto; margin-right: 1px; background: #e3e3e3; color: #fff; font-size: 11px; display: flex; align-items: center; justify-content: center; }
    .tools { height: 28px; margin: 0 28px 0 2px; padding-bottom: 2px; display: flex; align-items: center; background: linear-gradient(#fdfdfd, #efefef); flex: none; border-top: 1px solid #eee; box-sizing: border-box; white-space: nowrap; }
    .tools span { flex: none; }
    .off { color: #888; }
    .sep { width: 1px; height: 18px; background: #bbb; flex: none; margin: 0 6px; }
    .grip { width: 3px; height: 16px; background: repeating-linear-gradient(#999 0 2px, transparent 2px 4px); margin: 0 4px 0 3px; flex: none; }
    .opts { height: 28px; display: flex; align-items: center; background: linear-gradient(#fdfdfd, #f0f0f0); flex: none; white-space: nowrap; }
    .radios { display: flex; align-items: center; height: 22px; width: 193px; padding-left: 5px; box-sizing: border-box; margin-left: 2px; background: #efefef; }
    .radio { width: 11px; height: 11px; border: 1px solid #999; border-radius: 50%; box-sizing: border-box; background: #fff; flex: none; display: flex; align-items: center; justify-content: center; }
    .radio.on::after { content: ""; width: 5px; height: 5px; border-radius: 50%; background: #111; }
    .spin { width: 78px; height: 22px; box-sizing: border-box; border: 1px solid #7a7a7a; background: #f6f6f6; display: flex; align-items: center; justify-content: flex-end; color: #777; padding-right: 3px; gap: 6px; font-size: 13px; }
    .spin i { font: 7px "Liberation Sans", sans-serif; color: #666; line-height: 8px; display: block; text-align: center; }
    .label { font-size: 13px; }
    .mm { font-size: 12px; letter-spacing: .4px; }
    .canvas { height: 514px; background: #000; overflow: hidden; flex: none; }
    .dyn { height: 27px; background: #eee; border-bottom: 1px solid #a9a9a9; display: flex; align-items: center; padding-left: 2px; box-sizing: content-box; flex: none; }
    .dyn span { width: 58px; height: 22px; box-sizing: border-box; border: 1px solid #0078d7; background: #d9e8f5; display: flex; align-items: center; justify-content: center; color: #222; font-size: 12px; }
    .foot { flex: 1; background: #eee; border-top: 1px solid #fafafa; display: flex; align-items: flex-start; padding-top: 8px; box-sizing: border-box; }
    .foot gl-button { height: 23px; }`;
  markup() {
    return `
      <div class="title">多边形编辑器<div class="x">x</div></div>
      <div class="tools">
        <i class="grip"></i>${icon('mesh', 15)}<span style="margin-left:4px">定义网格</span><i class="sep" style="margin-right:5px"></i>
        <span style="margin:0 2px 0 3px">${icon('line', 14)}</span><span class="off" style="margin-left:2px">画直线</span>
        <span style="margin:0 4px 0 8px">${icon('arc', 15)}</span><span class="off">画弧</span>
        <span style="margin:0 4px 0 8px">${icon('circle', 15)}</span><span class="off">画圆</span><i class="sep" style="margin-right:7px"></i>
        ${icon('cross', 15)}<span style="margin-left:4px">清除多边形</span><i class="sep" style="margin-right:7px"></i>
        ${icon('undo', 14)}<span style="margin-left:5px">回退</span><i class="sep"></i>
        ${icon('diskin', 17)}<span style="margin-left:3px">导入</span><span style="margin-left:7px">${icon('diskout', 17)}</span><span style="margin-left:3px">导出</span><i class="sep"></i>
        ${icon('zoom', 16)}<span style="margin-left:4px">查询多边形库</span>
      </div>
      <div class="opts">
        <div class="radios"><i class="radio on"></i><span style="margin-left:11px;width:47px">不偏移</span><i class="radio"></i><span style="margin-left:8px;width:28px">正交</span><i class="radio" style="margin-left:3px"></i><span style="margin-left:9px">极坐标</span></div>
        <span class="label" style="margin-right:7px;border-left:1px solid #bbb;padding-left:3px">X =</span>
        <div class="spin">0<span><i>▲</i><i>▼</i></span></div><span class="mm" style="margin:0 14px 0 5px">mm</span>
        <span class="label" style="margin-right:7px">Y =</span>
        <div class="spin">0<span><i>▲</i><i>▼</i></span></div><span class="mm" style="margin-left:5px">mm</span>
      </div>
      <div class="canvas"><polygon-canvas></polygon-canvas></div>
      <div class="dyn"><span>动态输入</span></div>
      <div class="foot">
        <gl-button style="width:105px;margin-left:536px">从CAD选择截面图</gl-button>
        <gl-button style="width:113px;margin-left:23px">在CAD中绘制截面图</gl-button>
        <gl-button style="width:72px;margin-left:25px">确定</gl-button>
        <gl-button style="width:72px;margin-left:15px">取消</gl-button>
      </div>`;
  }
}

class GlButton extends Part {
  static styles = `:host { display: flex; align-items: center; justify-content: center; box-sizing: border-box; background: #e1e1e1; border: 1px solid #adadad; font: 12px ${SONG}; white-space: nowrap; color: #111; flex: none; }`;
}

class PolygonCanvas extends Part {
  static styles = `:host { display: block; width: 974px; height: 514px; } svg { display: block; } text { font-family: "Liberation Serif", serif; font-size: 23px; fill: #00f000; stroke: #00f000; stroke-width: .35px; }`;
  markup() {
    const line = (x1, y1, x2, y2, color, w = 1) => `<line x1="${x1}" y1="${y1}" x2="${x2}" y2="${y2}" stroke="${color}" stroke-width="${w}"/>`;
    const WHITE = '#fff', GREEN = '#0a7a0a', GRAY = '#bdbdbd';
    let straight = '', slanted = '';
    // dimension ticks on the top edge
    for (const x of [565, 631, 1031]) {
      straight += line(x + .5, 145, x + .5, 190, WHITE, 2);
      slanted += line(x - 18, 183, x + 20, 145, WHITE, 2);
    }
    straight += line(565, 164.5, 1031, 164.5, WHITE, 2);
    // vertical dimension lines left and right
    straight += line(511.5, 217, 511.5, 618, WHITE, 2);
    straight += line(1085.5, 217, 1085.5, 618, WHITE, 2);
    for (const y of [217, 350, 417, 618]) {
      straight += line(485, y + .5, 538, y + .5, WHITE, 2);
      slanted += line(491, y - 20, 530, y + 19, WHITE, 2);
    }
    for (const y of [217, 618]) {
      straight += line(1058, y + .5, 1111, y + .5, WHITE, 2);
      slanted += line(1066, y - 19, 1104, y + 19, WHITE, 2);
    }
    // ticks along the bottom edge
    for (const x of [631, 765, 1031]) {
      straight += line(x + .5, 644, x + .5, 659, WHITE, 2);
      straight += line(x + .5, 618, x + .5, 644, GREEN);
      slanted += line(x + 20, 652, x + 13, 659, WHITE, 2);
    }
    // extension lines
    const thin = line(538, 217.5, 565, 217.5, GREEN) + line(538, 350.5, 565, 350.5, GREEN) + line(538, 417.5, 565, 417.5, GREEN)
      + line(366, 417.5, 485, 417.5, GREEN) + line(366, 618.5, 485, 618.5, GREEN) + line(538, 618.5, 565, 618.5, GREEN)
      + line(391.5, 400, 391.5, 618, GREEN) + line(565.5, 618, 565.5, 659, GREEN)
      + line(565.5, 350, 565.5, 618, GRAY) + line(631.5, 217, 631.5, 618, GRAY) + line(765.5, 217, 765.5, 618, GRAY)
      + line(565, 350.5, 1031, 350.5, GRAY) + line(565, 417.5, 1031, 417.5, GRAY) + line(565, 618.5, 1031, 618.5, GRAY);
    const greenSlants = line(378, 404, 405, 431, GREEN) + line(378, 605, 405, 632, GREEN);
    return `<svg width="974" height="514" viewBox="308 145 974 514">
      <g shape-rendering="crispEdges">${thin}${straight}</g>
      <g shape-rendering="crispEdges">${slanted}${greenSlants}</g>
      <polygon points="565.5,217.5 1031.500,217.500 1031.500,618 765.500,618 765.500,417.500 631.500,417.500 631.500,350.500 565.500,350.500" fill="none" stroke="#f00" stroke-width="3.4"/>
      <text x="586" y="157">50</text><text x="814" y="153">300</text>
      <text x="476" y="293">100</text><text x="476" y="393">150</text>
      <text x="1086" y="425">300</text><text x="476" y="525">150</text>
      <text x="450" y="521" style="font:11px 'Liberation Mono',monospace;fill:#aaa;stroke:none">150</text>
    </svg>`;
  }
}

class GridDialog extends Part {
  static styles = `
    :host { position: absolute; left: 84px; top: 176px; width: 411px; height: 223px; box-sizing: border-box; border: 1px solid #1e8ae8; background: #efefef; box-shadow: 0 3px 10px rgba(0,0,0,.3); z-index: 3; display: flex; flex-direction: column; font: 12px ${SONG}; }
    .head { height: 25px; background: #fff; display: flex; align-items: center; padding: 0 9px 0 3px; flex: none; font-size: 12px; }
    .close { margin-left: auto; }
    .body { padding: 22px 13px 0 13px; display: flex; flex-direction: column; gap: 15px; }
    .foot { display: flex; justify-content: flex-end; gap: 15px; padding: 11px 14px 0 0; }
    .foot gl-button { width: 72px; height: 23px; }`;
  markup() {
    const sum = '间距*个数,间距,间距*个数,间距,...';
    return `
      <div class="head">定义网格<span class="close">${svg(11, 11, `<path d="M.5.5l10 10M10.500.5l-10 10" stroke="#222"/>`)}</span></div>
      <div class="body">
        <spacing-field label="水平方向间距(mm)=>${sum}" select>50,100,200</spacing-field>
        <spacing-field label="垂直方向间距(mm)=>${sum}">150,50,100</spacing-field>
      </div>
      <div class="foot"><gl-button>确定</gl-button><gl-button>取消</gl-button></div>`;
  }
}

class SpacingField extends Part {
  static styles = `
    :host { display: block; height: 58px; border: 2px solid #e0e0e0; box-sizing: border-box; position: relative; padding: 8px 8px 0 6px; }
    .legend { position: absolute; left: 5px; top: -12px; background: #efefef; padding: 0 3px 0 2px; height: 18px; display: flex; align-items: center; font-size: 12px; white-space: nowrap; letter-spacing: .3px; color: #222; }
    .box { height: 41px; box-sizing: border-box; border: 1px solid #7a7a7a; background: #fff; padding: 2px 2px; font: 12px "Liberation Mono", "Noto Sans CJK SC", monospace; letter-spacing: -1.100px; line-height: 14px; color: #222; }
    :host([select]) .text { background: #0a6ad0; color: #fff; }`;
  markup() {
    return `<div class="legend">${this.getAttribute('label')}</div><div class="box"><span class="text"><slot></slot></span></div>`;
  }
}

class GlTaskbar extends Part {
  static styles = `
    :host { display: flex; position: relative; height: 40px; flex: none; background: linear-gradient(#343434 0 20px, #061014 20px); color: #eee; font: 12px "Liberation Sans", "Noto Sans CJK SC", sans-serif; z-index: 4; }
    .start { width: 48px; background: #000; display: flex; align-items: center; justify-content: center; flex: none; }
    .search { width: 344px; background: #333; display: flex; align-items: center; padding-left: 12px; box-sizing: border-box; gap: 8px; color: #8f8f8f; font-size: 13px; flex: none; }
    .ring { width: 16px; height: 16px; border: 2px solid #e8e8e8; border-radius: 50%; box-sizing: border-box; flex: none; }
    .mic { margin-left: auto; margin-right: 12px; }
    .under { position: absolute; top: 1px; color: #111; font: 13px ${SONG}; letter-spacing: .5px; white-space: nowrap; }
    .tray { display: flex; align-items: center; flex: 1; min-width: 0; }
    .stack { display: flex; flex-direction: column; align-items: center; line-height: 19px; white-space: nowrap; flex: none; }
    .notify { margin-left: auto; margin-right: 26px; }`;
  markup() {
    return `
      <div class="start">${svg(17, 17, ICONS.win, '0 0 17 17')}</div>
      <div class="search"><span class="ring"></span>在这里输入你要搜索的内容<span class="mic">${icon('mic', 16, 18, '0 0 16 18')}</span></div>
      <task-icon w="49" icon="taskview" size="18"></task-icon>
      <task-icon w="50" icon="pinwheel" size="20"></task-icon>
      <task-icon w="51" icon="ieline" size="20"></task-icon>
      <task-icon w="50" icon="gswirl" size="18"></task-icon>
      <span style="width:26px;flex:none"></span>
      <task-icon w="44" icon="edge" size="20"></task-icon>
      <task-icon w="43" icon="ie" size="20"></task-icon>
      <task-icon w="43" icon="explorer" size="20" on></task-icon>
      <task-icon w="43" icon="gld" size="24" active></task-icon>
      <task-icon w="43" icon="gblue" size="22" on></task-icon>
      <task-icon w="43" icon="notes" size="24" on></task-icon>
      <task-icon w="43" icon="greene" size="22" on></task-icon>
      <div class="tray">
        <i style="width:3px;height:20px;border:solid #666;border-width:0 1px;margin:0 11px 0 14px;flex:none"></i>
        <span style="color:#ccc;margin-right:19px;flex:none">链接</span>
        <span class="stack" style="margin-right:18px;width:48px"><span>12%</span><span>CPU使用</span></span>
        <span style="margin-right:6px">${svg(14, 10, `<path d="M1 8l6-6 6 6" fill="none" stroke="#fff" stroke-width="1.200"/>`)}</span>
        <span style="margin:0 5px 0 2px">${svg(17, 18, ICONS.battery)}</span>
        <span style="margin:0 4px">${svg(17, 17, ICONS.wifi)}</span>
        <span>${svg(16, 18, ICONS.volume)}</span>
        <span style="margin:0 10px 0 9px">${svg(24, 16, ICONS.keyboard)}</span>
        <span style="font-size:13px;margin-right:12px">中</span>
        ${svg(17, 17, ICONS.sogou)}
        <span class="stack" style="margin-left:11px;width:70px"><span style="font-size:13px">20:13</span><span style="font-size:13px">2018/5/2</span></span>
        <span class="notify">${svg(16, 17, ICONS.notify)}</span>
      </div>
      <span class="under" style="left:394px">: 353)</span>
      <span class="under" style="left:460px">令: 无</span>
      <span class="under" style="left:609px">绘图结束</span>`;
  }
}

class TaskIcon extends Part {
  static styles = `
    :host { display: flex; align-items: center; justify-content: center; position: relative; flex: none; height: 40px; z-index: 1; }
    :host([active]) { background: rgba(255,255,255,.16); }
    :host([active])::after, :host([on])::after { content: ""; position: absolute; bottom: 0; height: 2px; background: #76b9ed; }
    :host([active])::after { left: 0; right: 0; }
    :host([on])::after { left: 4px; right: 4px; }`;
  markup() {
    const name = this.getAttribute('icon');
    const size = +this.getAttribute('size');
    this.style.width = `${this.getAttribute('w')}px`;
    return svg(size, size, ICONS[name], ['gld', 'notes', 'gblue'].includes(name) ? '0 0 24 24' : '0 0 20 20');
  }
}

customElements.define('gl-desktop', GlDesktop);
customElements.define('red-mark', RedMark);
customElements.define('speed-badge', SpeedBadge);
customElements.define('ime-bar', ImeBar);
customElements.define('win-controls', WinControls);
customElements.define('nav-panel', NavPanel);
customElements.define('tree-row', TreeRow);
customElements.define('part-list', PartList);
customElements.define('list-row', ListRow);
customElements.define('work-area', WorkArea);
customElements.define('gl-button', GlButton);
customElements.define('polygon-canvas', PolygonCanvas);
customElements.define('spacing-field', SpacingField);
customElements.define('polygon-editor', PolygonEditor);
customElements.define('grid-dialog', GridDialog);
customElements.define('task-icon', TaskIcon);
customElements.define('gl-taskbar', GlTaskbar);
customElements.define('gl-app', GlApp);
</script>
</body>
</html>
